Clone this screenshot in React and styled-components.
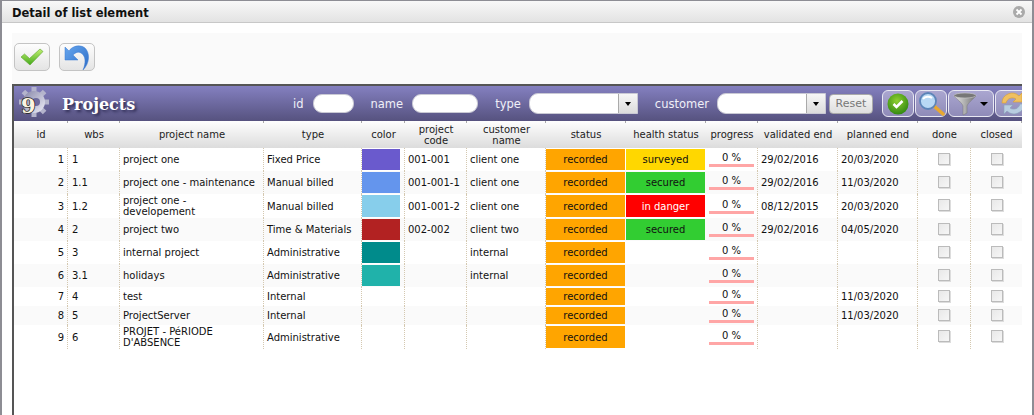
import React from "react";
import styled, { createGlobalStyle } from "styled-components";

const Global = createGlobalStyle`
  html, body { margin: 0; padding: 0; background: #8d8d94; overflow: hidden; }
  body { width: 1034px; height: 415px; font-family: "DejaVu Sans", Verdana, sans-serif; }
  * { box-sizing: border-box; }
`;

const Dialog = styled.div`
  width: 1030px; height: 414px; margin: 1px 0 0 2px; background: #fff;
  display: flex; flex-direction: column; overflow: hidden;
`;
const TitleBar = styled.div`
  height: 22px; flex: none; display: flex; align-items: center; justify-content: space-between;
  padding: 2px 7px 0 10px; background: linear-gradient(#f8f8f8, #e3e3e3);
  border-bottom: 1px solid #c8c8c8;
`;
const TitleText = styled.span`
  font: bold 11.5px "DejaVu Sans", sans-serif; color: #111;
`;
const CloseIcon = styled.svg`width: 12px; height: 12px; display: block; margin-top: -2px;`;
const Body = styled.div`
  flex: 1; min-height: 0; padding: 10px 10px 0; display: flex; flex-direction: column;
`;
const Actions = styled.div`
  height: 51px; flex: none; background: #fafafa; display: flex; gap: 9px; padding: 10px 2px;
`;
const ActionButton = styled.button`
  width: 36px; height: 28px; padding: 0; border: 1px solid #c4c4c4; border-radius: 5px;
  background: linear-gradient(#fdfdfd, #e4e4e4); display: flex; align-items: center; justify-content: center;
  & > svg { flex: none; }
`;
const Frame = styled.div`
  flex: 1; min-height: 0; border-top: 2px solid #555; border-left: 2px solid #555;
  overflow: hidden; display: flex; flex-direction: column;
`;
const Bar = styled.div`
  height: 35px; flex: none; display: flex; align-items: center; overflow: hidden;
  background: linear-gradient(#8480c0, #56527f);
`;
const Logo = styled.svg`width: 34px; height: 34px; flex: none; margin: 0 0 0 4px; display: block;`;
const BarTitle = styled.h1`
  margin: 2px 0 0 10px; width: 231px; flex: none; font: bold 16px "DejaVu Serif", serif; color: #fff;
  text-shadow: 2px 2px 3px #2c2a50;
`;
const FilterLabel = styled.label`
  font: 11.5px "DejaVu Sans", sans-serif; color: #f0f0f8; margin-left: ${p => p.$gap}px; margin-right: ${p => p.$after}px;
  white-space: nowrap;
`;
const PillInput = styled.div`
  width: ${p => p.$w}px; height: 19px; background: #fff; border: 1px solid #c9c9d4; border-radius: 9px; flex: none;
`;
const Combo = styled.div`
  width: 109px; height: 21px; flex: none; display: flex; background: #fff; border: 1px solid #c9c9d4;
  border-radius: 9px 0 0 9px;
`;
const ComboField = styled.div`flex: 1;`;
const ComboArrow = styled.div`
  width: 19px; background: linear-gradient(#f6f6f6, #dcdcdc); border-left: 1px solid #aaa;
  display: flex; align-items: center; justify-content: center;
  &::after { content: ""; border: 3.5px solid transparent; border-top: 4px solid #000; border-bottom: 0; }
`;
const Reset = styled.button`
  width: 44px; height: 20px; margin-left: 3px; flex: none; padding: 0; border: 1px solid #aaa; border-radius: 4px;
  background: linear-gradient(#f6f6f6, #dedede); color: #777; font: 11px "DejaVu Sans", sans-serif;
`;
const Tools = styled.div`display: flex; flex: none; margin-left: 9px; gap: 1px;`;
const Tool = styled.button`
  width: ${p => p.$w || 32}px; height: 27px; flex: none; padding: 0; border: 1px solid #e8e8f2; border-radius: 6px;
  background: linear-gradient(#aaa6d0, #8f8bb8); display: flex; align-items: center; justify-content: center; gap: 3px;
`;
const MiniArrow = styled.span`
  width: 0; height: 0; border: 4px solid transparent; border-top: 4px solid #000; border-bottom: 0;
`;
const Grid = styled.table`
  width: 1008px; table-layout: fixed; border-collapse: separate; border-spacing: 0; color: #111;
  font: 10px/11px "DejaVu Sans", sans-serif;
`;
const Head = styled.th`
  position: relative; height: 27px; padding: 0 2px; font-weight: normal; text-align: center; color: #222;
  background: linear-gradient(#fefefe, #dcdcdc);
  &::after { content: ""; position: absolute; top: 0; right: 0; width: 1px; height: 2px; background: #a8a8a8; }
`;
const Row = styled.tr`
  height: ${p => p.$h}px; background: ${p => (p.$alt ? "#fafafa" : "#fff")};
`;
const Cell = styled.td`
  padding: 0 ${p => (p.$padR ?? 0)}px 0 ${p => (p.$pad ?? 4)}px; border-right: 1px dotted #d4c8b0; text-align: ${p => p.$align || "left"};
  vertical-align: middle; overflow: hidden; white-space: ${p => (p.$wrap ? "normal" : "nowrap")};
  &:last-child { border-right: 0; }
`;
const FillCell = styled.td`
  padding: 1px 1px 1px 0; vertical-align: middle; text-align: center;
`;
const Badge = styled.div`
  height: ${p => p.$h - 2}px; display: flex; align-items: center; justify-content: center;
  background: ${p => p.$bg}; color: ${p => p.$fg || "#111"};
`;
const Swatch = styled.div`
  width: 38px; height: ${p => p.$h - 2}px; background: ${p => p.$bg};
`;
const SwatchCell = styled.td`
  padding: 1px 0; border-right: 1px dotted #d4c8b0; vertical-align: middle;
`;
const ProgressCell = styled.td`
  padding: 0 3px 2px; border-right: 1px dotted #d4c8b0; text-align: center; vertical-align: middle;
`;
const ProgressBar = styled.div`
  height: 17px; padding-top: 2px; border-bottom: 3px solid #ffa6a6; line-height: 12px;
`;
const Check = styled.span`
  display: block; width: 12px; height: 12px; margin: 0 auto 2px; background: linear-gradient(135deg, #e8e8e8, #f6f6f6);
  border: 1px solid #bbb; box-shadow: 1px 1px 0 #ddd;
`;

const widths = [54, 52, 144, 98, 43, 62, 79, 80, 80, 52, 80, 80, 53, 51];
const heads = ["id", "wbs", "project name", "type", "color", <>project<br />code</>, <>customer<br />name</>, "status", "health status", "progress", "validated end", "planned end", "done", "closed"];

const rows = [
  { id: 1, wbs: "1", name: "project one", type: "Fixed Price", color: "#6a5acd", code: "001-001", cust: "client one", health: ["surveyed", "#ffd700"], ve: "29/02/2016", pe: "20/03/2020", h: 23 },
  { id: 2, wbs: "1.1", name: "project one - maintenance", type: "Manual billed", color: "#6495ed", code: "001-001-1", cust: "client one", health: ["secured", "#32cd32"], ve: "29/02/2016", pe: "11/03/2020", h: 23 },
  { id: 3, wbs: "1.2", name: "project one - developement", type: "Manual billed", color: "#87ceeb", code: "001-001-2", cust: "client one", health: ["in danger", "#ff0000", "#fff"], ve: "08/12/2015", pe: "20/03/2020", h: 24 },
  { id: 4, wbs: "2", name: "project two", type: "Time & Materials", color: "#b22222", code: "002-002", cust: "client two", health: ["secured", "#32cd32"], ve: "29/02/2016", pe: "04/05/2020", h: 23 },
  { id: 5, wbs: "3", name: "internal project", type: "Administrative", color: "#008b8b", cust: "internal", h: 23 },
  { id: 6, wbs: "3.1", name: "holidays", type: "Administrative", color: "#20b2aa", cust: "internal", h: 23 },
  { id: 7, wbs: "4", name: "test", type: "Internal", pe: "11/03/2020", h: 19 },
  { id: 8, wbs: "5", name: "ProjectServer", type: "Internal", pe: "11/03/2020", h: 19 },
  { id: 9, wbs: "6", name: "PROJET - PéRIODE D'ABSENCE", type: "Administrative", h: 24 },
];

const teeth = Array.from({ length: 8 }, (_, i) => i * 45);

export default function App() {
  return (
    <>
      <Global />
      <Dialog>
        <TitleBar>
          <TitleText>Detail of list element</TitleText>
          <CloseIcon viewBox="0 0 12 12">
            <circle cx="6" cy="6" r="6" fill="#aaa" />
            <path d="M3.500 3.500l5 5M8.500 3.500l-5 5" stroke="#fff" strokeWidth="1.800" />
          </CloseIcon>
        </TitleBar>
        <Body>
          <Actions>
            <ActionButton aria-label="validate">
              <svg width="24" height="18" viewBox="0 0 24 18">
                <defs>
                  <linearGradient id="g1" x1="0" y1="0" x2="0" y2="1">
                    <stop offset="0" stopColor="#c2f070" />
                    <stop offset="1" stopColor="#44a81c" />
                  </linearGradient>
                </defs>
                <path d="M1 9l3.500-3 5 4.500L20 1l3 2.500L10 17z" fill="url(#g1)" stroke="#5aa52e" strokeWidth=".6" />
              </svg>
            </ActionButton>
            <ActionButton aria-label="undo">
              <svg width="30" height="28" viewBox="0 0 30 28">
                <defs>
                  <linearGradient id="u1" x1="0" y1="0" x2="1" y2="1">
                    <stop offset="0" stopColor="#66a6ee" />
                    <stop offset="1" stopColor="#2c6cc6" />
                  </linearGradient>
                </defs>
                <path d="M3 4L3 17L16 17L11 12C13 10 16 8 19 10C24 13 24 20 21 27C28 20 28 10 23 5C18 1 10 3 7 8Z" fill="url(#u1)" stroke="#3a78d0" strokeWidth=".5" />
              </svg>
            </ActionButton>
          </Actions>
          <Frame>
            <Bar>
              <Logo viewBox="0 0 34 34">
                <defs>
                  <linearGradient id="gear" x1="0" y1="0" x2="1" y2="1">
                    <stop offset="0" stopColor="#8686a8" />
                    <stop offset="1" stopColor="#eeeef8" />
                  </linearGradient>
                </defs>
                {teeth.map(a => (
                  <rect key={a} x="13.500" y="0" width="5" height="8" fill="#b4b4cc" transform={`rotate(${a} 16 15)`} />
                ))}
                <circle cx="16" cy="15" r="11" fill="url(#gear)" />
                <circle cx="18" cy="15" r="4" fill="#6d6a9c" />
                <text x="3" y="26" fontFamily="DejaVu Serif" fontWeight="bold" fontSize="21" fill="#fbf4e0" stroke="#222" strokeWidth="1.500" paintOrder="stroke">9</text>
              </Logo>
              <BarTitle>Projects</BarTitle>
              <FilterLabel $gap={0} $after={9}>id</FilterLabel>
              <PillInput $w={41} />
              <FilterLabel $gap={17} $after={9}>name</FilterLabel>
              <PillInput $w={66} />
              <FilterLabel $gap={17} $after={8}>type</FilterLabel>
              <Combo><ComboField /><ComboArrow /></Combo>
              <FilterLabel $gap={17} $after={8}>customer</FilterLabel>
              <Combo><ComboField /><ComboArrow /></Combo>
              <Reset>Reset</Reset>
              <Tools>
                <Tool aria-label="done">
                  <svg width="22" height="22" viewBox="0 0 22 22">
                    <defs>
                      <radialGradient id="gc" cx=".45" cy=".35" r=".7">
                        <stop offset="0" stopColor="#8fd030" />
                        <stop offset="1" stopColor="#2c8410" />
                      </radialGradient>
                    </defs>
                    <circle cx="11" cy="11" r="10.500" fill="url(#gc)" />
                    <path d="M6.500 11l3 3 6-6" fill="none" stroke="#fff" strokeWidth="2.500" />
                  </svg>
                </Tool>
                <Tool aria-label="search">
                  <svg width="28" height="25" viewBox="0 0 28 25">
                    <path d="M17 15l9 8" stroke="#e8a830" strokeWidth="3.500" strokeLinecap="round" />
                    <circle cx="11" cy="10" r="8" fill="#b8d8f4" stroke="#5c84b8" strokeWidth="1.800" />
                    <path d="M6 8a6 5 0 0 1 9-1" fill="none" stroke="#fff" strokeWidth="2" />
                  </svg>
                </Tool>
                <Tool $w={46} aria-label="filter">
                  <svg width="24" height="24" viewBox="0 0 24 24">
                    <defs>
                      <linearGradient id="fn" x1="0" y1="0" x2="1" y2="0">
                        <stop offset="0" stopColor="#e6e6e6" />
                        <stop offset="1" stopColor="#767676" />
                      </linearGradient>
                    </defs>
                    <path d="M1 4c3 3 8 7 9 10v9l4-2v-7c1-3 6-7 9-10z" fill="url(#fn)" stroke="#777" strokeWidth=".5" />
                    <ellipse cx="12" cy="3.500" rx="11" ry="2.500" fill="#777" stroke="#ccc" strokeWidth=".6" />
                  </svg>
                  <MiniArrow />
                </Tool>
                <Tool $w={36} aria-label="refresh">
                  <svg width="30" height="25" viewBox="0 0 28 25">
                    <path d="M3 12A10 10 0 0 1 20 5l3-3v9h-9l3-3A6.500 6.500 0 0 0 7 12z" fill="#f0c060" stroke="#d9a030" strokeWidth=".6" />
                    <path d="M25 13A10 10 0 0 1 8 20l-3 3v-9h9l-3 3a6.500 6.500 0 0 0 10-4z" fill="#b8cde0" stroke="#8aa3bb" strokeWidth=".6" />
                  </svg>
                </Tool>
              </Tools>
            </Bar>
            <Grid>
              <colgroup>
                {widths.map((w, i) => <col key={i} style={{ width: w }} />)}
              </colgroup>
              <thead>
                <tr>{heads.map((h, i) => <Head key={i}>{h}</Head>)}</tr>
              </thead>
              <tbody>
                {rows.map((r, i) => (
                  <Row key={r.id} $h={r.h} $alt={i % 2 === 1}>
                    <Cell $align="right" $padR={3}>{r.id}</Cell>
                    <Cell>{r.wbs}</Cell>
                    <Cell $wrap $pad={3} $padR={6}>{r.name}</Cell>
                    <Cell $pad={3}>{r.type}</Cell>
                    <SwatchCell>{r.color && <Swatch $bg={r.color} $h={r.h} />}</SwatchCell>
                    <Cell $pad={3}>{r.code}</Cell>
                    <Cell $pad={3}>{r.cust}</Cell>
                    <FillCell><Badge $bg="#ffa500" $h={r.h}>recorded</Badge></FillCell>
                    <FillCell>{r.health && <Badge $bg={r.health[1]} $fg={r.health[2]} $h={r.h}>{r.health[0]}</Badge>}</FillCell>
                    <ProgressCell><ProgressBar>0 %</ProgressBar></ProgressCell>
                    <Cell $pad={3}>{r.ve}</Cell>
                    <Cell $pad={3}>{r.pe}</Cell>
                    <Cell $pad={0}><Check /></Cell>
                    <Cell $pad={0}><Check /></Cell>
                  </Row>
                ))}
              </tbody>
            </Grid>
          </Frame>
        </Body>
      </Dialog>
    </>
  );
}
